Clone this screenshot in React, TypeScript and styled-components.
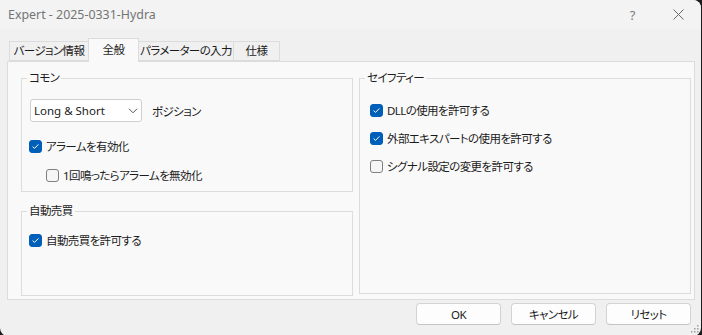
import React from "react";
import styled, { createGlobalStyle } from "styled-components";

const Global = createGlobalStyle`
  html, body { margin: 0; padding: 0; background: #1c1c1c; }
  body { width: 702px; height: 335px; overflow: hidden; }
  #root { width: 702px; height: 335px; }
  * { box-sizing: border-box; }
`;

const UI_FONT = `"Noto Sans", "Noto Sans CJK JP", sans-serif`;

const Window = styled.div`
  position: relative;
  width: 701px;
  height: 336px;
  background: #f0f0f0;
  border-radius: 0 8px 8px 8px;
  overflow: hidden;
  display: flex;
  flex-direction: column;
  font-family: ${UI_FONT};
  font-size: 11.5px;
  letter-spacing: -0.6px;
  color: #1b1b1b;
  font-feature-settings: "palt";
`;

const TitleBar = styled.div`
  height: 29px;
  flex-shrink: 0;
  background: #f3f3f3;
  display: flex;
  align-items: center;
  padding-left: 8px;
`;

const Title = styled.div`
  flex: 1;
  color: #737373;
  font-size: 12.4px;
  letter-spacing: 0;
  line-height: 16px;
`;

const CaptionButton = styled.div<{ $w: number }>`
  width: ${(p) => p.$w}px;
  height: 29px;
  display: flex;
  align-items: center;
  justify-content: center;
  color: #7a7a7a;
  font-size: 13px;
  letter-spacing: 0;
`;

const Content = styled.div`
  flex: 1;
  display: flex;
  flex-direction: column;
  padding: 9px 6px 0 7px;
`;

const TabStrip = styled.div`
  display: flex;
  align-items: flex-end;
  height: 23px;
  padding-left: 2px;
  position: relative;
  z-index: 1;
`;

const Tab = styled.div<{ $w: number; $active?: boolean }>`
  width: ${(p) => p.$w}px;
  height: ${(p) => (p.$active ? 24 : 20)}px;
  margin-left: -1px;
  margin-bottom: ${(p) => (p.$active ? -1 : 0)}px;
  &:first-child { margin-left: 0; }
  border: 1px solid #dcdcdc;
  border-bottom: ${(p) => (p.$active ? "none" : "1px solid #dcdcdc")};
  background: ${(p) => (p.$active ? "#f9f9f9" : "#f0f0f0")};
  position: relative;
  z-index: ${(p) => (p.$active ? 2 : 1)};
  display: flex;
  align-items: ${(p) => (p.$active ? "flex-start" : "center")};
  padding-top: ${(p) => (p.$active ? 3 : 0)}px;
  justify-content: center;
  line-height: 16px;
  white-space: nowrap;
`;

const Panel = styled.div`
  height: 239px;
  border: 1px solid #dcdcdc;
  background: #f9f9f9;
  display: flex;
  gap: 6px;
  padding: 9px 3px 3px 13px;
`;

const Column = styled.div`
  width: 332px;
  display: flex;
  flex-direction: column;
  gap: 12px;
`;

const Group = styled.fieldset<{ $h?: number; $mb?: number }>`
  margin: 0 0 ${(p) => p.$mb ?? 0}px 0;
  padding: 0;
  min-width: 0;
  border: 1px solid #dcdcdc;
  ${(p) => (p.$h ? `height: ${p.$h}px; flex-shrink: 0;` : "flex: 1;")}
`;

const Legend = styled.legend`
  margin-left: 5px;
  padding: 0 2px;
  line-height: 14px;
`;

const GroupBody = styled.div<{ $pt: number; $pl: number; $gap: number }>`
  display: flex;
  flex-direction: column;
  align-items: flex-start;
  padding: ${(p) => p.$pt}px 0 0 ${(p) => p.$pl}px;
  gap: ${(p) => p.$gap}px;
`;

const ComboRow = styled.div`
  display: flex;
  align-items: center;
  gap: 10px;
  margin-left: 1px;
  margin-bottom: 5px;
`;

const Combo = styled.div`
  width: 112px;
  height: 23px;
  border: 1px solid #cfcfcf;
  border-radius: 3px;
  background: #ffffff;
  display: flex;
  align-items: center;
  justify-content: space-between;
  padding: 0 3px 0 3px;
  letter-spacing: 0;
`;

const Row = styled.label<{ $indent?: number }>`
  display: flex;
  align-items: center;
  gap: 4px;
  height: 20px;
  margin-left: ${(p) => p.$indent ?? 0}px;
  white-space: nowrap;
`;

const Box = styled.span<{ $on: boolean }>`
  width: 13px;
  height: 13px;
  border-radius: 3px;
  flex-shrink: 0;
  display: flex;
  align-items: center;
  justify-content: center;
  background: ${(p) => (p.$on ? "#005fb8" : "#f6f6f6")};
  border: 1px solid ${(p) => (p.$on ? "#005fb8" : "#7f7f7f")};
`;

const ButtonRow = styled.div`
  display: flex;
  justify-content: flex-end;
  gap: 10px;
  margin-top: 3px;
  padding-right: 4px;
`;

const Button = styled.div`
  width: 85px;
  height: 22px;
  border: 1px solid #d3d3d3;
  border-bottom-color: #c4c4c4;
  border-radius: 4px;
  background: #fdfdfd;
  display: flex;
  align-items: center;
  justify-content: center;
`;

const Grip = styled.svg`
  position: absolute;
  right: 2px;
  bottom: 3px;
`;

function Check({ on, label, indent }: { on: boolean; label: string; indent?: number }) {
  return (
    <Row $indent={indent}>
      <Box $on={on}>
        {on && (
          <svg width="9" height="9" viewBox="0 0 9 9">
            <path d="M1.6 4.6 L3.5 6.4 L7.4 2.4" fill="none" stroke="#ffffff" strokeWidth="1" />
          </svg>
        )}
      </Box>
      <span>{label}</span>
    </Row>
  );
}

export default function App() {
  return (
    <>
      <Global />
      <Window>
        <TitleBar>
          <Title>Expert - 2025-0331-Hydra</Title>
          <CaptionButton $w={45}>?</CaptionButton>
          <CaptionButton $w={46}>
            <svg width="11" height="11" viewBox="0 0 11 11">
              <path d="M0.5 0.5 L10.5 10.5 M10.5 0.5 L0.5 10.5" stroke="#6a6a6a" strokeWidth="1" fill="none" />
            </svg>
          </CaptionButton>
        </TitleBar>
        <Content>
          <TabStrip>
            <Tab $w={80}>バージョン情報</Tab>
            <Tab $w={51} $active>全般</Tab>
            <Tab $w={96}>パラメーターの入力</Tab>
            <Tab $w={47}>仕様</Tab>
          </TabStrip>
          <Panel>
            <Column>
              <Group $h={121}>
                <Legend>コモン</Legend>
                <GroupBody $pt={14} $pl={7} $gap={9}>
                  <ComboRow>
                    <Combo>
                      <span>Long &amp; Short</span>
                      <svg width="10" height="6" viewBox="0 0 10 6">
                        <path d="M1 0.8 L5 4.8 L9 0.8" fill="none" stroke="#555" strokeWidth="1" />
                      </svg>
                    </Combo>
                    <span>ポジション</span>
                  </ComboRow>
                  <Check on label="アラームを有効化" />
                  <Check on={false} indent={17} label="1回鳴ったらアラームを無効化" />
                </GroupBody>
              </Group>
              <Group>
                <Legend>自動売買</Legend>
                <GroupBody $pt={12} $pl={7} $gap={8}>
                  <Check on label="自動売買を許可する" />
                </GroupBody>
              </Group>
            </Column>
            <Column>
              <Group $mb={2}>
                <Legend>セイフティー</Legend>
                <GroupBody $pt={15} $pl={10} $gap={8}>
                  <Check on label="DLLの使用を許可する" />
                  <Check on label="外部エキスパートの使用を許可する" />
                  <Check on={false} label="シグナル設定の変更を許可する" />
                </GroupBody>
              </Group>
            </Column>
          </Panel>
          <ButtonRow>
            <Button>OK</Button>
            <Button>キャンセル</Button>
            <Button>リセット</Button>
          </ButtonRow>
        </Content>
        <Grip width="8" height="8" viewBox="0 0 8 8">
          <rect x="6" y="0" width="1.5" height="1.5" fill="#a0a0a0" />
          <rect x="3" y="3" width="1.5" height="1.5" fill="#a0a0a0" />
          <rect x="6" y="3" width="1.5" height="1.5" fill="#a0a0a0" />
          <rect x="0" y="6" width="1.5" height="1.5" fill="#a0a0a0" />
          <rect x="3" y="6" width="1.5" height="1.5" fill="#a0a0a0" />
          <rect x="6" y="6" width="1.5" height="1.5" fill="#a0a0a0" />
        </Grip>
      </Window>
    </>
  );
}
